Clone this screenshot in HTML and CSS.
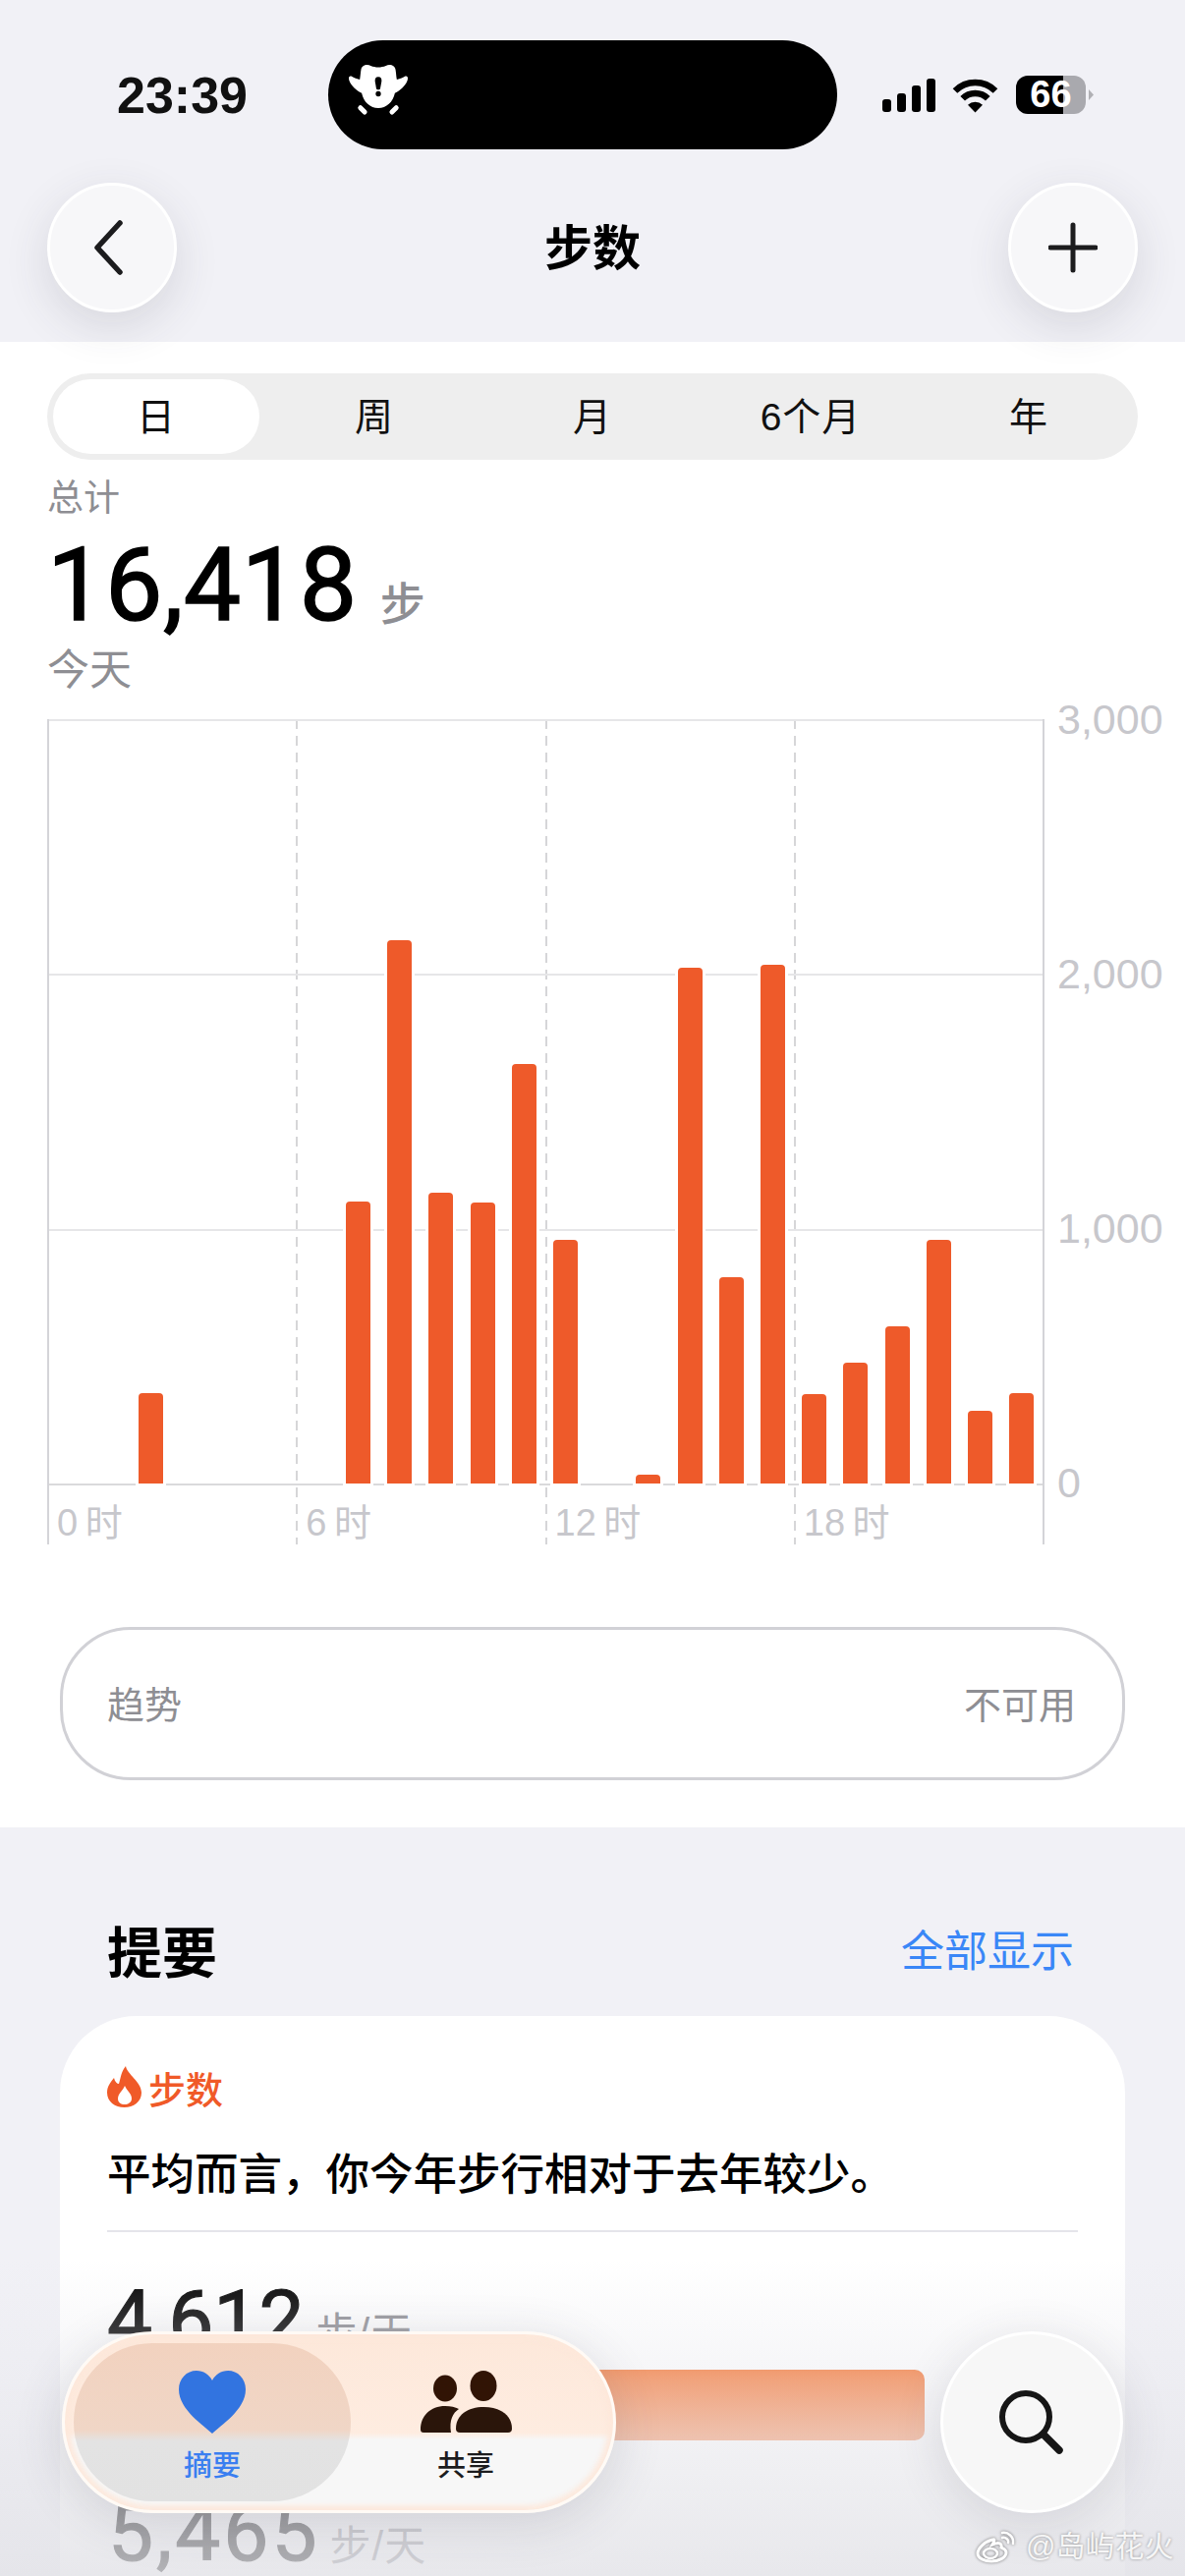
FILE: index.html
```html
<!DOCTYPE html>
<html lang="zh-CN">
<head>
<meta charset="UTF-8">
<meta name="viewport" content="width=device-width, initial-scale=1.0">
<title>步数</title>
<link rel="stylesheet" href="styles.css">
</head>
<body>
<div class="screen">
  <header class="top">
    <div class="status">
      <div class="time">23:39</div>
      <div class="island">
        <svg class="island-icon" viewBox="105 125 180 160">
          <path fill="#fff" d="M142 140 C144 126 160 122 172 128 C186 134 204 134 218 128 C230 122 246 126 248 140 C250 152 250 162 252 170 C262 168 272 164 278 160 C286 158 287 166 284 174 C278 190 262 204 246 212 C240 240 220 258 195 258 C170 258 150 240 144 212 C128 204 112 190 106 174 C103 166 104 158 112 160 C118 164 128 168 138 170 C140 162 140 152 142 140 Z"/>
          <path fill="#000" d="M195 162 C203 162 206 168 205 176 L201 198 C200 202 190 202 189 198 L185 176 C184 168 187 162 195 162 Z"/>
          <circle fill="#000" cx="195" cy="214" r="8"/>
          <path stroke="#fff" stroke-width="15" stroke-linecap="round" d="M140 257 L153 270 M250 257 L237 270"/>
        </svg>
      </div>
      <div class="status-icons">
        <div class="signal">
          <span class="signal-bar bar-1"></span>
          <span class="signal-bar bar-2"></span>
          <span class="signal-bar bar-3"></span>
          <span class="signal-bar bar-4"></span>
        </div>
        <svg class="wifi" viewBox="0 0 49 36">
          <path fill="none" stroke="#000" stroke-width="6.5" d="M4 13.5 A29 29 0 0 1 45 13.5"/>
          <path fill="none" stroke="#000" stroke-width="6.5" d="M11.7 21.3 A18 18 0 0 1 37.3 21.3"/>
          <path fill="#000" d="M24.5 35.5 L17 27.8 A11 11 0 0 1 32 27.8 Z"/>
        </svg>
        <div class="battery"><span class="battery-level">66</span></div>
        <span class="battery-cap"></span>
      </div>
    </div>
    <div class="nav">
      <button class="round-btn">
        <svg class="nav-icon" viewBox="0 0 46 56"><path fill="none" stroke="#1c1c1e" stroke-width="5.5" stroke-linecap="round" stroke-linejoin="round" d="M31 3 L8 28 L31 53"/></svg>
      </button>
      <h1 class="nav-title">步数</h1>
      <button class="round-btn">
        <svg class="nav-icon" viewBox="0 0 50 50"><path fill="none" stroke="#1c1c1e" stroke-width="5" stroke-linecap="round" d="M25 2 V48 M2 25 H48"/></svg>
      </button>
    </div>
  </header>

  <main class="main">
    <div class="segments">
      <div class="segment selected">日</div>
      <div class="segment">周</div>
      <div class="segment">月</div>
      <div class="segment">6个月</div>
      <div class="segment">年</div>
    </div>

    <div class="total-label">总计</div>
    <div class="total"><span class="total-value">16,418</span><span class="total-unit">步</span></div>
    <div class="total-date">今天</div>

    <div class="chart">
      <div class="plot">
        <div class="v-lines">
          <div class="v-col"></div><div class="v-col"></div><div class="v-col"></div><div class="v-col"></div>
        </div>
        <div class="h-lines">
          <div class="h-line"></div><div class="h-line"></div><div class="h-line"></div><div class="h-line base"></div>
        </div>
        <div class="bars">
          <div class="slot"></div><div class="slot"></div>
          <div class="slot"><div class="bar" style="height:92px"></div></div>
          <div class="slot"></div><div class="slot"></div><div class="slot"></div><div class="slot"></div>
          <div class="slot"><div class="bar" style="height:287px"></div></div>
          <div class="slot"><div class="bar" style="height:553px"></div></div>
          <div class="slot"><div class="bar" style="height:296px"></div></div>
          <div class="slot"><div class="bar" style="height:286px"></div></div>
          <div class="slot"><div class="bar" style="height:427px"></div></div>
          <div class="slot"><div class="bar" style="height:248px"></div></div>
          <div class="slot"></div>
          <div class="slot"><div class="bar" style="height:9px"></div></div>
          <div class="slot"><div class="bar" style="height:525px"></div></div>
          <div class="slot"><div class="bar" style="height:210px"></div></div>
          <div class="slot"><div class="bar" style="height:528px"></div></div>
          <div class="slot"><div class="bar" style="height:91px"></div></div>
          <div class="slot"><div class="bar" style="height:123px"></div></div>
          <div class="slot"><div class="bar" style="height:160px"></div></div>
          <div class="slot"><div class="bar" style="height:248px"></div></div>
          <div class="slot"><div class="bar" style="height:74px"></div></div>
          <div class="slot"><div class="bar" style="height:92px"></div></div>
        </div>
        <div class="x-labels">
          <span>0 时</span><span>6 时</span><span>12 时</span><span>18 时</span>
        </div>
      </div>
      <div class="y-labels">
        <span>3,000</span><span>2,000</span><span>1,000</span><span>0</span>
      </div>
    </div>

    <div class="trend">
      <span>趋势</span>
      <span>不可用</span>
    </div>
  </main>

  <section class="summary">
    <div class="summary-head">
      <h2>提要</h2>
      <span class="show-all">全部显示</span>
    </div>
    <div class="card">
      <div class="card-label">
        <svg class="flame" viewBox="0 0 35 42">
          <path fill="#f05a28" d="M19 0 C20 8 35 16 35 27 C35 36 27 42 17.5 42 C8 42 0 36 0 27 C0 20 4 16 7 12 C8 16 10 18 12 18 C14 12 14 6 19 0 Z"/>
          <path fill="#fff" d="M18 20 C20 25 25 28 25 33 C25 37 21 39 18 39 C14 39 11 37 11 33 C11 28 16 25 18 20 Z"/>
        </svg>
        <span>步数</span>
      </div>
      <p class="card-text">平均而言，你今年步行相对于去年较少。</p>
      <div class="divider"></div>
      <div class="stat"><span class="stat-value">4,612</span><span class="stat-unit">步/天</span></div>
      <div class="stat-bar"></div>
      <div class="stat last"><span class="stat-value">5,465</span><span class="stat-unit">步/天</span></div>
    </div>
  </section>

  <div class="fade"></div>

  <div class="dock">
    <div class="tabbar">
      <div class="tab active">
        <svg class="tab-icon heart" viewBox="0 0 68 64"><path fill="#3274e0" d="M34 64 C26 56 0 40 0 19 C0 8 8 0 18 0 C25 0 31 4 34 10 C37 4 43 0 50 0 C60 0 68 8 68 19 C68 40 42 56 34 64 Z"/></svg>
        <span>摘要</span>
      </div>
      <div class="tab share">
        <svg class="tab-icon people" viewBox="0 0 93 64">
          <ellipse fill="#311405" cx="25" cy="18" rx="12" ry="13.5"/>
          <ellipse fill="#311405" cx="64" cy="15.5" rx="13.5" ry="15.5"/>
          <path fill="#2a150a" d="M36 59 C36 45 48 37 64.5 37 C81 37 93 45 93 59 Q93 63 89 63 H40 Q36 63 36 59 Z"/>
          <path fill="#2a150a" d="M0 60 C0 46 10 36 25 36 C31 36 35 37 39 39 C33 43 29 50 31 63 H3 Q0 63 0 60 Z"/>
        </svg>
        <span>共享</span>
      </div>
    </div>
    <button class="search-btn">
      <svg class="search-icon" viewBox="0 0 66 66">
        <circle cx="27" cy="27" r="24" fill="none" stroke="#161616" stroke-width="6"/>
        <path stroke="#161616" stroke-width="7.5" stroke-linecap="round" d="M45 45 L61 61"/>
      </svg>
    </button>
  </div>

  <div class="watermark">
    <svg class="weibo" viewBox="0 0 42 34">
      <path fill="none" stroke="#fff" stroke-width="3" d="M17 10 C9 12 2 19 2 24 C2 29 9 32 16 32 C24 32 31 28 31 23 C31 20 28 19 26 18 C27 14 24 12 17 15 C20 10 19 9 17 10 Z"/>
      <ellipse fill="none" stroke="#fff" stroke-width="2.5" cx="15" cy="24" rx="7" ry="5"/>
      <path fill="none" stroke="#fff" stroke-width="2.5" stroke-linecap="round" d="M27 3 C33 2 39 7 38 14 M27 8 C30 7 34 10 33 13"/>
    </svg>
    <span>@岛屿花火</span>
  </div>
</div>
</body>
</html>
```

FILE: styles.css
```css
* {
  box-sizing: border-box;
}
html, body {
  margin: 0;
  padding: 0;
}
body {
  font-family: "Liberation Sans", "Noto Sans CJK SC", sans-serif;
  background-color: #fff;
  color: #000;
}
h1, h2, p {
  margin: 0;
}
button {
  padding: 0;
  font: inherit;
}
.screen {
  position: relative;
  width: 1206px;
  height: 2622px;
  overflow: hidden;
}

/* Status bar and nav */
.top {
  position: relative;
  z-index: 2;
  height: 348px;
  background-color: #f1f1f6;
}
.status {
  display: flex;
  align-items: center;
  height: 152px;
  padding: 41px 0 0 119px;
}
.time {
  width: 215px;
  font-size: 52px;
  font-weight: 700;
  line-height: 60px;
  color: #111;
}
.island {
  display: flex;
  align-items: center;
  width: 518px;
  height: 111px;
  padding: 0 0 8px 21px;
  background-color: #000;
  border-radius: 56px;
}
.island-icon {
  width: 60px;
  height: 53px;
}
.status-icons {
  display: flex;
  align-items: center;
  margin-left: 46px;
}
.signal {
  display: flex;
  align-items: flex-end;
  gap: 6px;
  height: 34px;
}
.signal-bar {
  width: 9px;
  background-color: #000;
  border-radius: 3px;
}
.bar-1 { height: 13px; }
.bar-2 { height: 19px; }
.bar-3 { height: 27px; }
.bar-4 { height: 34px; }
.wifi {
  width: 49px;
  height: 36px;
  margin-left: 16px;
}
.battery {
  width: 71px;
  height: 39px;
  margin-left: 17px;
  background: linear-gradient(to right, #000 67.6%, #a9a9ae 67.6%);
  border-radius: 12px;
  text-align: center;
}
.battery-level {
  font-size: 38px;
  font-weight: 700;
  line-height: 39px;
  color: #fff;
}
.battery-cap {
  width: 5px;
  height: 11px;
  margin-left: 3px;
  background-color: #b0b0b4;
  clip-path: polygon(0 0, 100% 50%, 0 100%);
}
.nav {
  display: flex;
  align-items: center;
  justify-content: space-between;
  padding: 34px 48px 0;
}
.round-btn {
  display: flex;
  align-items: center;
  justify-content: center;
  width: 132px;
  height: 132px;
  background-color: #f7f7f9;
  border: 3px solid #fff;
  border-radius: 50%;
  box-shadow: 0 14px 46px rgba(60, 60, 80, 0.14);
}
.nav-icon {
  width: 50px;
  height: 56px;
}
.nav-title {
  padding-top: 2px;
  font-size: 49px;
  font-weight: 700;
  line-height: 60px;
}

/* White chart panel */
.main {
  height: 1512px;
  padding: 32px 48px 0;
  background-color: #fff;
}
.segments {
  display: grid;
  grid-template-columns: repeat(5, 1fr);
  height: 88px;
  background-color: #eeeeee;
  border-radius: 44px;
}
.segment {
  margin: 6px;
  padding-top: 2px;
  font-size: 39px;
  line-height: 74px;
  letter-spacing: 1px;
  text-align: center;
  color: #111;
}
.segment.selected {
  background-color: #fff;
  border-radius: 38px;
}
.total-label {
  margin-top: 18px;
  font-size: 37px;
  line-height: 44px;
  color: #8e8e93;
}
.total {
  display: flex;
  align-items: baseline;
  height: 126px;
  padding-top: 7px;
}
.total-value {
  font-family: Roboto, "Liberation Sans", sans-serif;
  font-size: 104px;
  font-weight: 400;
  line-height: 118px;
  letter-spacing: 0.5px;
  -webkit-text-stroke: 1.5px #000;
}
.total-unit {
  margin-left: 23px;
  font-size: 46px;
  font-weight: 500;
  color: #8e8e93;
}
.total-date {
  padding-top: 1px;
  font-size: 43px;
  line-height: 50px;
  color: #8e8e93;
}

/* Chart */
.chart {
  display: flex;
  margin-top: 25px;
}
.plot {
  position: relative;
  flex: none;
  width: 1015px;
  height: 840px;
  border-left: 2px solid #d4d4d8;
  border-right: 2px solid #d4d4d8;
}
.v-lines {
  position: absolute;
  top: 0;
  right: 0;
  bottom: 0;
  left: -2px;
  display: grid;
  grid-template-columns: repeat(4, 1fr);
}
.v-col {
  background-image: repeating-linear-gradient(to bottom, #d6d6d8 0, #d6d6d8 10px, transparent 10px, transparent 17px);
  background-size: 2px 100%;
  background-repeat: no-repeat;
}
.v-col:first-child {
  background-image: none;
}
.h-lines {
  position: absolute;
  top: 0;
  left: 0;
  right: 0;
  display: flex;
  flex-direction: column;
  justify-content: space-between;
  height: 780px;
}
.h-line {
  height: 2px;
  background-color: #e6e6e8;
}
.h-line.base {
  background-color: #dadadc;
}
.bars {
  position: relative;
  display: flex;
  align-items: flex-end;
  height: 778px;
  margin-left: -2px;
}
.slot {
  display: flex;
  flex: 1;
  justify-content: center;
}
.bar {
  width: 25px;
  background-color: #ee5a2a;
  border-radius: 4px 4px 0 0;
  box-shadow: 0 0 0 3px #fff;
}
.x-labels {
  position: relative;
  display: grid;
  grid-template-columns: repeat(4, 1fr);
  margin-left: -2px;
  padding-top: 18px;
  font-size: 38px;
  line-height: 44px;
  word-spacing: -3px;
  color: #c7c7cc;
}
.x-labels span {
  padding-left: 10px;
}
.y-labels {
  display: flex;
  flex: none;
  flex-direction: column;
  justify-content: space-between;
  height: 778px;
  margin-left: 13px;
  font-size: 43px;
  color: #c7c7cc;
}
.y-labels span {
  display: flex;
  align-items: center;
  height: 0;
}
.trend {
  display: flex;
  align-items: center;
  justify-content: space-between;
  width: 1084px;
  height: 156px;
  margin: 84px 0 0 13px;
  padding: 0 47px 4px 45px;
  border: 3px solid #d1d1d6;
  border-radius: 72px;
  font-size: 38px;
  color: #8e8e93;
}

/* Summary panel */
.summary {
  height: 762px;
  padding: 89px 61px 0;
  background-color: #f1f1f6;
}
.summary-head {
  display: flex;
  align-items: center;
  justify-content: space-between;
  height: 68px;
  padding: 0 52px 0 48px;
}
.summary-head h2 {
  font-size: 56px;
  font-weight: 700;
}
.show-all {
  font-size: 44px;
  color: #3a87f7;
}
.card {
  height: 700px;
  margin-top: 35px;
  padding: 51px 48px 0;
  background-color: #fff;
  border-radius: 78px 78px 0 0;
}
.card-label {
  display: flex;
  align-items: center;
  gap: 7px;
  height: 42px;
  font-size: 38px;
  font-weight: 500;
  color: #f05a28;
}
.flame {
  width: 35px;
  height: 42px;
}
.card-text {
  margin-top: 39px;
  font-size: 44.5px;
  font-weight: 500;
  line-height: 60px;
  white-space: nowrap;
}
.divider {
  height: 2px;
  margin-top: 26px;
  background-color: #e5e5ea;
}
.stat {
  display: flex;
  align-items: baseline;
  height: 90px;
  margin-top: 44px;
}
.stat-value {
  font-family: Roboto, "Liberation Sans", sans-serif;
  font-size: 82px;
  font-weight: 400;
  line-height: 90px;
  -webkit-text-stroke: 1.2px #000;
}
.stat-unit {
  margin-left: 12px;
  font-size: 42px;
  letter-spacing: 1px;
  color: #8e8e93;
}
.stat-bar {
  width: 832px;
  height: 72px;
  margin-top: 6px;
  background: linear-gradient(to bottom, #f76a20, #f89a6c);
  border-radius: 0 10px 10px 0;
}
.stat.last {
  height: 76px;
  margin-top: 56px;
  padding-left: 1px;
}
.stat.last .stat-value {
  line-height: 76px;
  letter-spacing: 3px;
}
.stat.last .stat-unit {
  margin-left: 10px;
}

/* Bottom overlay */
.fade {
  position: absolute;
  top: 2300px;
  left: 0;
  right: 0;
  bottom: 0;
  background: linear-gradient(to bottom, rgba(235, 235, 240, 0), rgba(232, 232, 237, 0.42) 38%, rgba(226, 226, 231, 0.8));
}
.dock {
  position: absolute;
  top: 2373px;
  left: 63px;
  right: 63px;
  display: flex;
  justify-content: space-between;
}
.tabbar {
  display: flex;
  width: 564px;
  height: 185px;
  padding: 9px;
  background: linear-gradient(to bottom, #fde8da 0, #feece0 56%, #f7f7f7 60%, #f7f7f7 100%);
  border: 3px solid #fffaf5;
  border-radius: 93px;
  box-shadow: 0 10px 50px rgba(60, 60, 80, 0.16), inset 0 0 5px 5px rgba(253, 232, 218, 0.9);
}
.tab {
  display: flex;
  flex: none;
  flex-direction: column;
  align-items: center;
  width: 282px;
  padding-top: 28px;
  font-size: 29px;
  font-weight: 500;
  line-height: 34px;
  color: #1c1c1e;
}
.tab.active {
  background: linear-gradient(to bottom, #f2d2bf 0, #f0d6c6 55%, #e3e3e3 62%, #e2e2e2 100%);
  border-radius: 80px;
  color: #3a7ff0;
}
.tab.share {
  width: 234px;
}
.tab-icon {
  height: 64px;
  margin-bottom: 16px;
}
.heart {
  width: 68px;
}
.people {
  width: 93px;
}
.search-btn {
  display: flex;
  align-items: center;
  justify-content: center;
  width: 186px;
  height: 185px;
  background-color: #f7f7f7;
  border: 3px solid #fff;
  border-radius: 50%;
  box-shadow: 0 10px 50px rgba(60, 60, 80, 0.14);
}
.search-icon {
  width: 66px;
  height: 66px;
}
.watermark {
  position: absolute;
  top: 2572px;
  left: 993px;
  display: flex;
  align-items: center;
  gap: 9px;
  font-size: 30px;
  line-height: 40px;
  white-space: nowrap;
  color: #f6f6f6;
  text-shadow: 0 0 3px rgba(0, 0, 0, 0.4);
}
.weibo {
  width: 42px;
  height: 34px;
  filter: drop-shadow(0 0 1.5px rgba(0, 0, 0, 0.5));
}
```
